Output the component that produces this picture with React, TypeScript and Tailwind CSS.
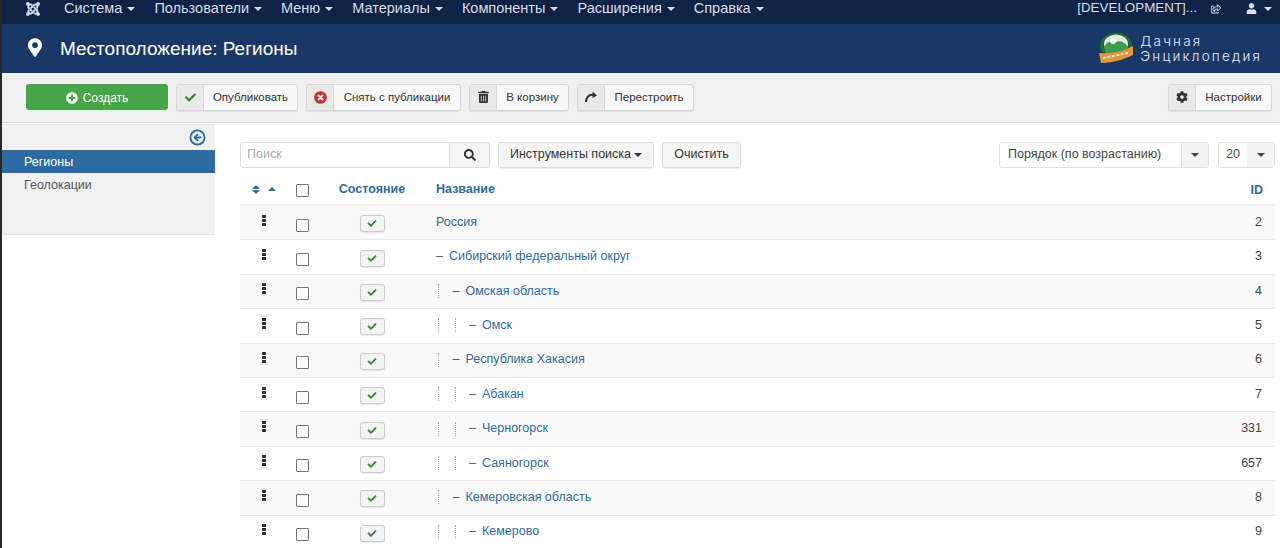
import React from "react";
import { FaCheck, FaPlusCircle, FaTimesCircle, FaTrashAlt, FaCog, FaSearch, FaUser, FaMapMarkerAlt, FaRegShareSquare, FaJoomla } from "react-icons/fa";
import { CircleArrowLeft } from "lucide-react";

const menu = ["Система", "Пользователи", "Меню", "Материалы", "Компоненты", "Расширения", "Справка"];

const rows = [
  { name: "Россия", level: 0, id: 2 },
  { name: "Сибирский федеральный округ", level: 1, id: 3 },
  { name: "Омская область", level: 2, id: 4 },
  { name: "Омск", level: 3, id: 5 },
  { name: "Республика Хакасия", level: 2, id: 6 },
  { name: "Абакан", level: 3, id: 7 },
  { name: "Черногорск", level: 3, id: 331 },
  { name: "Саяногорск", level: 3, id: 657 },
  { name: "Кемеровская область", level: 2, id: 8 },
  { name: "Кемерово", level: 3, id: 9 },
];

const Caret = ({ className = "" }: { className?: string }) => (
  <span className={`inline-block w-0 h-0 border-x-[4px] border-x-transparent border-t-[4px] ${className}`} />
);

const ToolButton = ({ icon, label, width }: { icon: React.ReactNode; label: string; width: string }) => (
  <div className={`flex h-[27px] ${width} rounded-[3px] border border-[#d8d8d8] bg-[#f7f7f7] shadow-[0_1px_1px_rgba(0,0,0,0.08)] text-[11.5px] text-[#333]`}>
    <span className="flex w-[27px] shrink-0 items-center justify-center border-r border-[#d8d8d8] bg-[#e9e9e9]">{icon}</span>
    <span className="flex flex-1 items-center justify-center pt-[1px]">{label}</span>
  </div>
);

const Checkbox = () => <span className="block h-[13px] w-[13px] rounded-[1px] border border-[#767676] bg-white" />;

const DragDots = () => (
  <span className="flex flex-col gap-[1px]">
    <span className="h-[3px] w-[4px] bg-[#333]" />
    <span className="h-[3px] w-[4px] bg-[#333]" />
    <span className="h-[3px] w-[4px] bg-[#333]" />
  </span>
);

const RefreshIcon = () => (
  <svg width="14" height="13" viewBox="0 0 14 13" fill="none">
    <path d="M2 11 C2 6 5 3.5 9 4" stroke="#333" strokeWidth="2.2" />
    <path d="M8.5 0.5 L13 4.5 L8.5 7 Z" fill="#333" />
  </svg>
);

const Logo = () => (
  <svg width="36" height="33" viewBox="0 0 36 33">
    <ellipse cx="18" cy="14" rx="16" ry="13.5" fill="#1f6a36" />
    <ellipse cx="18" cy="12" rx="12" ry="9.5" fill="#dfe9dc" />
    <path d="M6 15 C10 8 14 9 17 11 C21 7 27 10 30 15 L29 21 L8 23 Z" fill="#3f9a4c" />
    <circle cx="15" cy="9" r="3" fill="#f4f6f2" />
    <path d="M1 21 C12 22 24 20 35 14 L35 23 C25 28 13 31 3 31 Z" fill="#e2963a" />
    <path d="M5 26 L30 21" stroke="#fbe7c2" strokeWidth="2" strokeDasharray="3 1.5" />
  </svg>
);

export default function App() {
  return (
    <div className="h-[548px] w-[1280px] overflow-hidden border-l-2 border-[#24282c] bg-white font-['Liberation_Sans',Arial,sans-serif] text-[12.5px] text-[#333]">
      <nav className="flex h-[24px] items-center bg-[#0f2347] pb-[7px] pl-[23px] pr-[8px] text-[14.5px] text-[#d9dee6]">
        <FaJoomla className="mr-[23px] h-[16px] w-[16px] text-[#d5dae2]" />
        <div className="flex gap-[19px]">
          {menu.map((m) => (
            <span key={m} className="flex items-center gap-[5px]">
              {m}
              <Caret className="border-t-[#d9dee6]" />
            </span>
          ))}
        </div>
        <span className="ml-auto flex items-center text-[13.4px]">
          [DEVELOPMENT]...
          <FaRegShareSquare className="ml-[14px] h-[10px] w-[10px]" />
          <FaUser className="ml-[25px] h-[11px] w-[11px]" />
          <Caret className="ml-[7px] border-t-[#d9dee6]" />
        </span>
      </nav>

      <header className="flex h-[49px] items-center bg-[#1a3867] pl-[26px] pr-[18px] text-white">
        <FaMapMarkerAlt className="mb-[3px] h-[19px] w-[14px]" />
        <h1 className="ml-[18px] mb-[1px] text-[19px] leading-none">Местоположение: Регионы</h1>
        <div className="ml-auto flex items-center gap-[6px]">
          <Logo />
          <div className="flex flex-col gap-[1px] font-['Inter',sans-serif] text-[13.5px] font-light leading-[14px] tracking-[2.2px] text-[#e6ebf2]">
            <div>Дачная</div>
            <div>Энциклопедия</div>
          </div>
        </div>
      </header>

      <div className="flex h-[50px] items-center gap-[8px] border-b border-[#e2e2e2] bg-[#f0f0f0] pl-[24px] pr-[8px] pb-[1px]">
        <div className="flex h-[26px] w-[142px] items-center justify-center gap-[5px] rounded-[3px] bg-[#46a546] pt-[1px] text-[12px] text-white">
          <FaPlusCircle className="h-[12px] w-[12px]" />
          Создать
        </div>
        <ToolButton width="w-[122px]" icon={<FaCheck className="h-[11px] w-[11px] text-[#378137]" />} label="Опубликовать" />
        <ToolButton width="w-[155px]" icon={<FaTimesCircle className="h-[13px] w-[13px] text-[#bd362f]" />} label="Снять с публикации" />
        <ToolButton width="w-[100px]" icon={<FaTrashAlt className="h-[12px] w-[11px] text-[#333]" />} label="В корзину" />
        <ToolButton width="w-[117px]" icon={<RefreshIcon />} label="Перестроить" />
        <div className="ml-auto">
          <ToolButton width="w-[104px]" icon={<FaCog className="h-[12px] w-[12px] text-[#333]" />} label="Настройки" />
        </div>
      </div>

      <div className="flex items-start">
        <aside className="mt-[1px] h-[111px] w-[213px] shrink-0 border-b border-[#e5e5e5] bg-[#f0f0f0]">
          <div className="flex h-[26px] justify-end pr-[9px] pt-[5px]">
            <CircleArrowLeft className="h-[17px] w-[17px] text-[#2d6ca2]" strokeWidth={2.6} />
          </div>
          <div className="flex h-[23px] items-center bg-[#2d6ca2] pl-[22px] pt-[1px] text-white">Регионы</div>
          <div className="flex h-[23px] items-center pl-[22px] pt-[1px] text-[#555]">Геолокации</div>
        </aside>

        <main className="ml-[25px] mr-[5px] flex-1">
          <div className="mt-[18px] flex h-[27px] items-center">
            <div className="flex h-[26px] w-[250px]">
              <div className="flex flex-1 items-center rounded-l-[3px] border border-[#ddd] pl-[6px] text-[#aaa]">Поиск</div>
              <div className="-ml-px flex w-[41px] items-center justify-center rounded-r-[3px] border border-[#ddd] bg-[#f5f5f5]">
                <FaSearch className="h-[12px] w-[12px] text-[#333]" />
              </div>
            </div>
            <div className="ml-[8px] flex h-[26px] w-[156px] items-center justify-center gap-[3px] rounded-[3px] border border-[#ddd] bg-[#f5f5f5] shadow-[0_1px_1px_rgba(0,0,0,0.06)]">
              Инструменты поиска
              <Caret className="border-t-[#333]" />
            </div>
            <div className="ml-[8px] flex h-[26px] w-[79px] items-center justify-center rounded-[3px] border border-[#ddd] bg-[#f5f5f5] shadow-[0_1px_1px_rgba(0,0,0,0.06)]">
              Очистить
            </div>
            <div className="ml-auto flex h-[26px] w-[210px] rounded-[3px] border border-[#e2e2e2]">
              <span className="flex flex-1 items-center pl-[8px] text-[#444]">Порядок (по возрастанию)</span>
              <span className="flex w-[27px] items-center justify-center border-l border-[#e2e2e2] bg-[#f3f3f3]">
                <Caret className="border-t-[#444]" />
              </span>
            </div>
            <div className="ml-[9px] flex h-[26px] w-[57px] rounded-[3px] border border-[#e2e2e2]">
              <span className="flex flex-1 items-center pl-[7px] text-[#444]">20</span>
              <span className="flex w-[27px] items-center justify-center bg-[#f3f3f3]">
                <Caret className="border-t-[#444]" />
              </span>
            </div>
          </div>

          <div className="mt-[8px] flex h-[30px] items-center border-b-2 border-[#eee] font-bold text-[#2d6ca2]">
            <span className="flex w-[38px] items-center justify-center gap-[8px] pl-[10px] pb-[2px]">
              <span className="flex flex-col gap-[1px]">
                <span className="h-0 w-0 border-x-[4px] border-b-[4px] border-x-transparent border-b-[#2d6ca2]" />
                <span className="h-0 w-0 border-x-[4px] border-t-[4px] border-x-transparent border-t-[#2d6ca2]" />
              </span>
              <span className="h-0 w-0 border-x-[4px] border-b-[4px] border-x-transparent border-b-[#2d6ca2]" />
            </span>
            <span className="flex w-[45px] justify-center pl-[4px]"><Checkbox /></span>
            <span className="w-[87px] pb-[1px] pl-[11px] text-center">Состояние</span>
            <span className="flex-1 pl-[26px] pb-[1px]">Название</span>
            <span className="pr-[12px]">ID</span>
          </div>

          {rows.map((r, i) => (
            <div key={r.id} className={`flex h-[34.4px] items-center border-b border-[#e8e8e8] ${i % 2 === 0 ? "bg-[#f9f9f9]" : "bg-white"}`}>
              <span className="flex w-[47px] justify-center pb-[5px]"><DragDots /></span>
              <span className="flex w-[30px] justify-center pt-[5px]"><Checkbox /></span>
              <span className="flex w-[93px] justify-center pl-[17px] pt-[2px]">
                <span className="flex h-[17px] w-[25px] items-center justify-center rounded-[3px] border border-[#ccc] bg-[#f3f3f3] shadow-[0_1px_1px_rgba(0,0,0,0.08)]">
                  <FaCheck className="h-[9px] w-[10px] text-[#378137]" />
                </span>
              </span>
              <span className="flex flex-1 items-center pb-[1px] pl-[26px]">
                {Array.from({ length: Math.max(r.level - 1, 0) }).map((_, k) => (
                  <span key={k} className="flex w-[16.5px] justify-start pl-[2px]">
                    <span className="h-[14px] w-0 border-l border-dotted border-[#aaa]" />
                  </span>
                ))}
                {r.level > 0 && <span className="w-[13px] text-[#555]">–</span>}
                <span className="text-[#2d6ca2]">{r.name}</span>
              </span>
              <span className="pb-[1px] pr-[13px] text-[#444]">{r.id}</span>
            </div>
          ))}
        </main>
      </div>
    </div>
  );
}
